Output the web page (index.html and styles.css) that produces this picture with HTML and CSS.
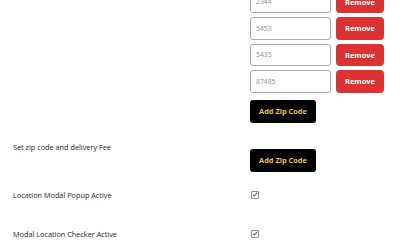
FILE: index.html
```html
<!DOCTYPE html>
<html>
<head>
<meta charset="utf-8">
<link rel="stylesheet" href="styles.css">
</head>
<body>
<div class="table">
  <div class="row row-zips">
    <div class="label"></div>
    <div class="field">
      <div class="zips">
        <div class="zip-row"><input class="zip-input" type="text" value="2344"><button class="remove">Remove</button></div>
        <div class="zip-row"><input class="zip-input" type="text" value="5453"><button class="remove">Remove</button></div>
        <div class="zip-row"><input class="zip-input" type="text" value="5435"><button class="remove">Remove</button></div>
        <div class="zip-row"><input class="zip-input" type="text" value="87485"><button class="remove">Remove</button></div>
      </div>
      <button class="add">Add Zip Code</button>
    </div>
  </div>
  <div class="row row-fee">
    <div class="label">Set zip code and delivery Fee</div>
    <div class="field"><button class="add">Add Zip Code</button></div>
  </div>
  <div class="row row-check row-c1">
    <div class="label">Location Modal Popup Active</div>
    <div class="field"><span class="check"><svg viewBox="0 0 8 8" width="7" height="7"><path d="M1.2 4.2 L3.1 6 L6.8 1.8" fill="none" stroke="#2271b1" stroke-width="1.4"/></svg></span></div>
  </div>
  <div class="row row-check row-c2">
    <div class="label">Modal Location Checker Active</div>
    <div class="field"><span class="check"><svg viewBox="0 0 8 8" width="7" height="7"><path d="M1.2 4.2 L3.1 6 L6.8 1.8" fill="none" stroke="#2271b1" stroke-width="1.4"/></svg></span></div>
  </div>
</div>
</body>
</html>
```
FILE: styles.css
```css
html, body {
  margin: 0;
  padding: 0;
  background: #fff;
  overflow: hidden;
}
body {
  width: 400px;
  height: 240px;
  font-family: "Open Sans", "Noto Sans", sans-serif;
  color: #1d2327;
}
.table {
  display: flex;
  flex-direction: column;
  margin-top: -9.5px;
}
.row {
  display: flex;
  align-items: flex-start;
}
.label {
  width: 250px;
  padding-left: 13px;
  box-sizing: border-box;
  font-size: 7.3px;
  line-height: 10px;
  flex-shrink: 0;
}
.field {
  display: flex;
  flex-direction: column;
  align-items: flex-start;
}
.zips {
  display: flex;
  flex-direction: column;
  gap: 4px;
}
.zip-row {
  display: flex;
  gap: 5px;
  height: 22.5px;
}
.zip-input {
  width: 81px;
  height: 22.5px;
  box-sizing: border-box;
  margin: 0;
  border: 1px solid #a7aaad;
  border-radius: 3px;
  padding: 0 5px;
  font-family: "Open Sans", sans-serif;
  font-size: 6.8px;
  color: #8c8f94;
  background: #fff;
  outline: none;
}
.remove {
  width: 48px;
  height: 22.5px;
  margin: 0;
  border: none;
  border-radius: 4px;
  background: #dc3232;
  color: #fff;
  font-family: "Open Sans", sans-serif;
  font-weight: 700;
  font-size: 7.5px;
  padding: 0;
}
.add {
  width: 66px;
  height: 23px;
  margin: 7px 0 0;
  border: none;
  border-radius: 3px;
  background: #000;
  color: #f0c24a;
  font-family: "Open Sans", sans-serif;
  font-weight: 700;
  font-size: 7.4px;
  padding: 0;
}
.row-fee {
  padding-top: 16px;
}
.row-fee .label {
  padding-top: 3px;
}
.row-fee .add {
  margin-top: 10px;
}
.row-check {
  align-items: center;
}
.row-c1 {
  padding-top: 18px;
  padding-bottom: 12px;
}
.row-c2 {
  padding-top: 17px;
}
.check {
  margin-left: 1px;
  width: 8px;
  height: 8px;
  box-sizing: border-box;
  border: 1px solid #8c8f94;
  border-radius: 1px;
  display: flex;
  align-items: center;
  justify-content: center;
  background: #fff;
}
.check svg {
  display: block;
}
```
